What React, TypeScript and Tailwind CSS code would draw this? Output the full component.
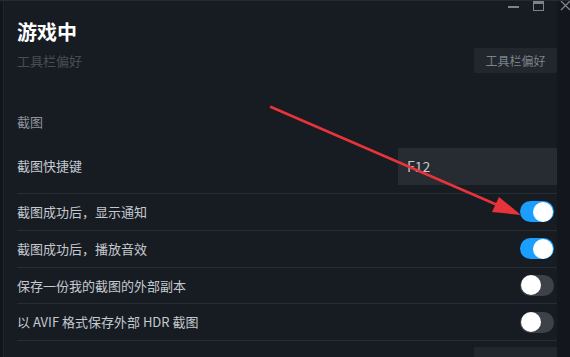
import React from "react";

const font = { fontFamily: '"Noto Sans CJK SC", "Noto Sans", sans-serif' };

function Toggle({ on }: { on: boolean }): React.ReactElement {
  return (
    <div
      className={`w-[34px] h-[21px] rounded-full flex items-center px-[1px] ${
        on ? "bg-[#1a9fff] justify-end" : "bg-[#3d4249] justify-start"
      }`}
    >
      <div className="w-[20px] h-[20px] rounded-full bg-white" />
    </div>
  );
}

function Row({ label, on }: { label: string; on: boolean }): React.ReactElement {
  return (
    <div className="h-[37px] flex items-center justify-between border-t border-[#282d35] pr-[3px]">
      <span className="text-[13px] text-[#c4c9d0]">{label}</span>
      <Toggle on={on} />
    </div>
  );
}

export default function App(): React.ReactElement {
  return (
    <div
      className="relative w-[570px] h-[357px] overflow-hidden bg-[#171c23] flex border-t border-[#262a31]"
      style={font}
    >
      <div className="w-[4px] bg-[#12151b] border-r border-[#20242b]" />
      <div className="flex-1 pl-[13px] flex flex-col">
        <div className="pt-[16px] text-[20px] leading-[29px] font-bold text-white">游戏中</div>
        <div className="h-[26px] mt-[2px] flex items-center justify-between">
          <span className="text-[13px] text-[#5d636b] opacity-70">工具栏偏好</span>
          <div className="w-[83px] h-[25px] bg-[#22272e] rounded-[2px] flex items-center justify-center text-[12px] text-[#7c828a]">
            工具栏偏好
          </div>
        </div>
        <div className="mt-[38px] text-[13px] text-[#8d939b]">截图</div>
        <div className="mt-[14px] h-[48px] flex items-center justify-between pb-[6px]">
          <span className="text-[13px] text-[#c4c9d0]">截图快捷键</span>
          <div className="w-[159px] h-[37px] bg-[#272b32] flex items-center pl-[9px] text-[14px] text-[#c4c9d0]">
            F12
          </div>
        </div>
        <Row label="截图成功后，显示通知" on />
        <Row label="截图成功后，播放音效" on />
        <Row label="保存一份我的截图的外部副本" on={false} />
        <Row label="以 AVIF 格式保存外部 HDR 截图" on={false} />
        <div className="border-t border-[#282d35] flex justify-end">
          <div className="mt-[6px] w-[83px] h-[10px] bg-[#22272e]" />
        </div>
      </div>
      <div className="w-[13px] bg-[#13171d]" />

      {/* window controls */}
      <div className="absolute top-0 right-0 flex items-start">
        <div className="w-[11px] h-[2px] bg-[#7d838b] mt-[5px] mr-[14px]" />
        <div className="w-[11px] h-[10px] border border-[#7d838b] border-t-[3px] mr-[16px]" />
        <svg width="10" height="10" viewBox="0 0 10 10">
          <path d="M1 0 L10 9 M10 0 L1 9" stroke="#7d838b" strokeWidth="1.3" />
        </svg>
      </div>

      {/* red annotation arrow */}
      <svg className="absolute left-0 top-0 pointer-events-none" width="570" height="357">
        <line x1="271" y1="106" x2="502" y2="206" stroke="#e8333a" strokeWidth="2.5" strokeLinecap="round" />
        <polygon points="521,214 492,211 499,196" fill="#e8333a" />
      </svg>
    </div>
  );
}
